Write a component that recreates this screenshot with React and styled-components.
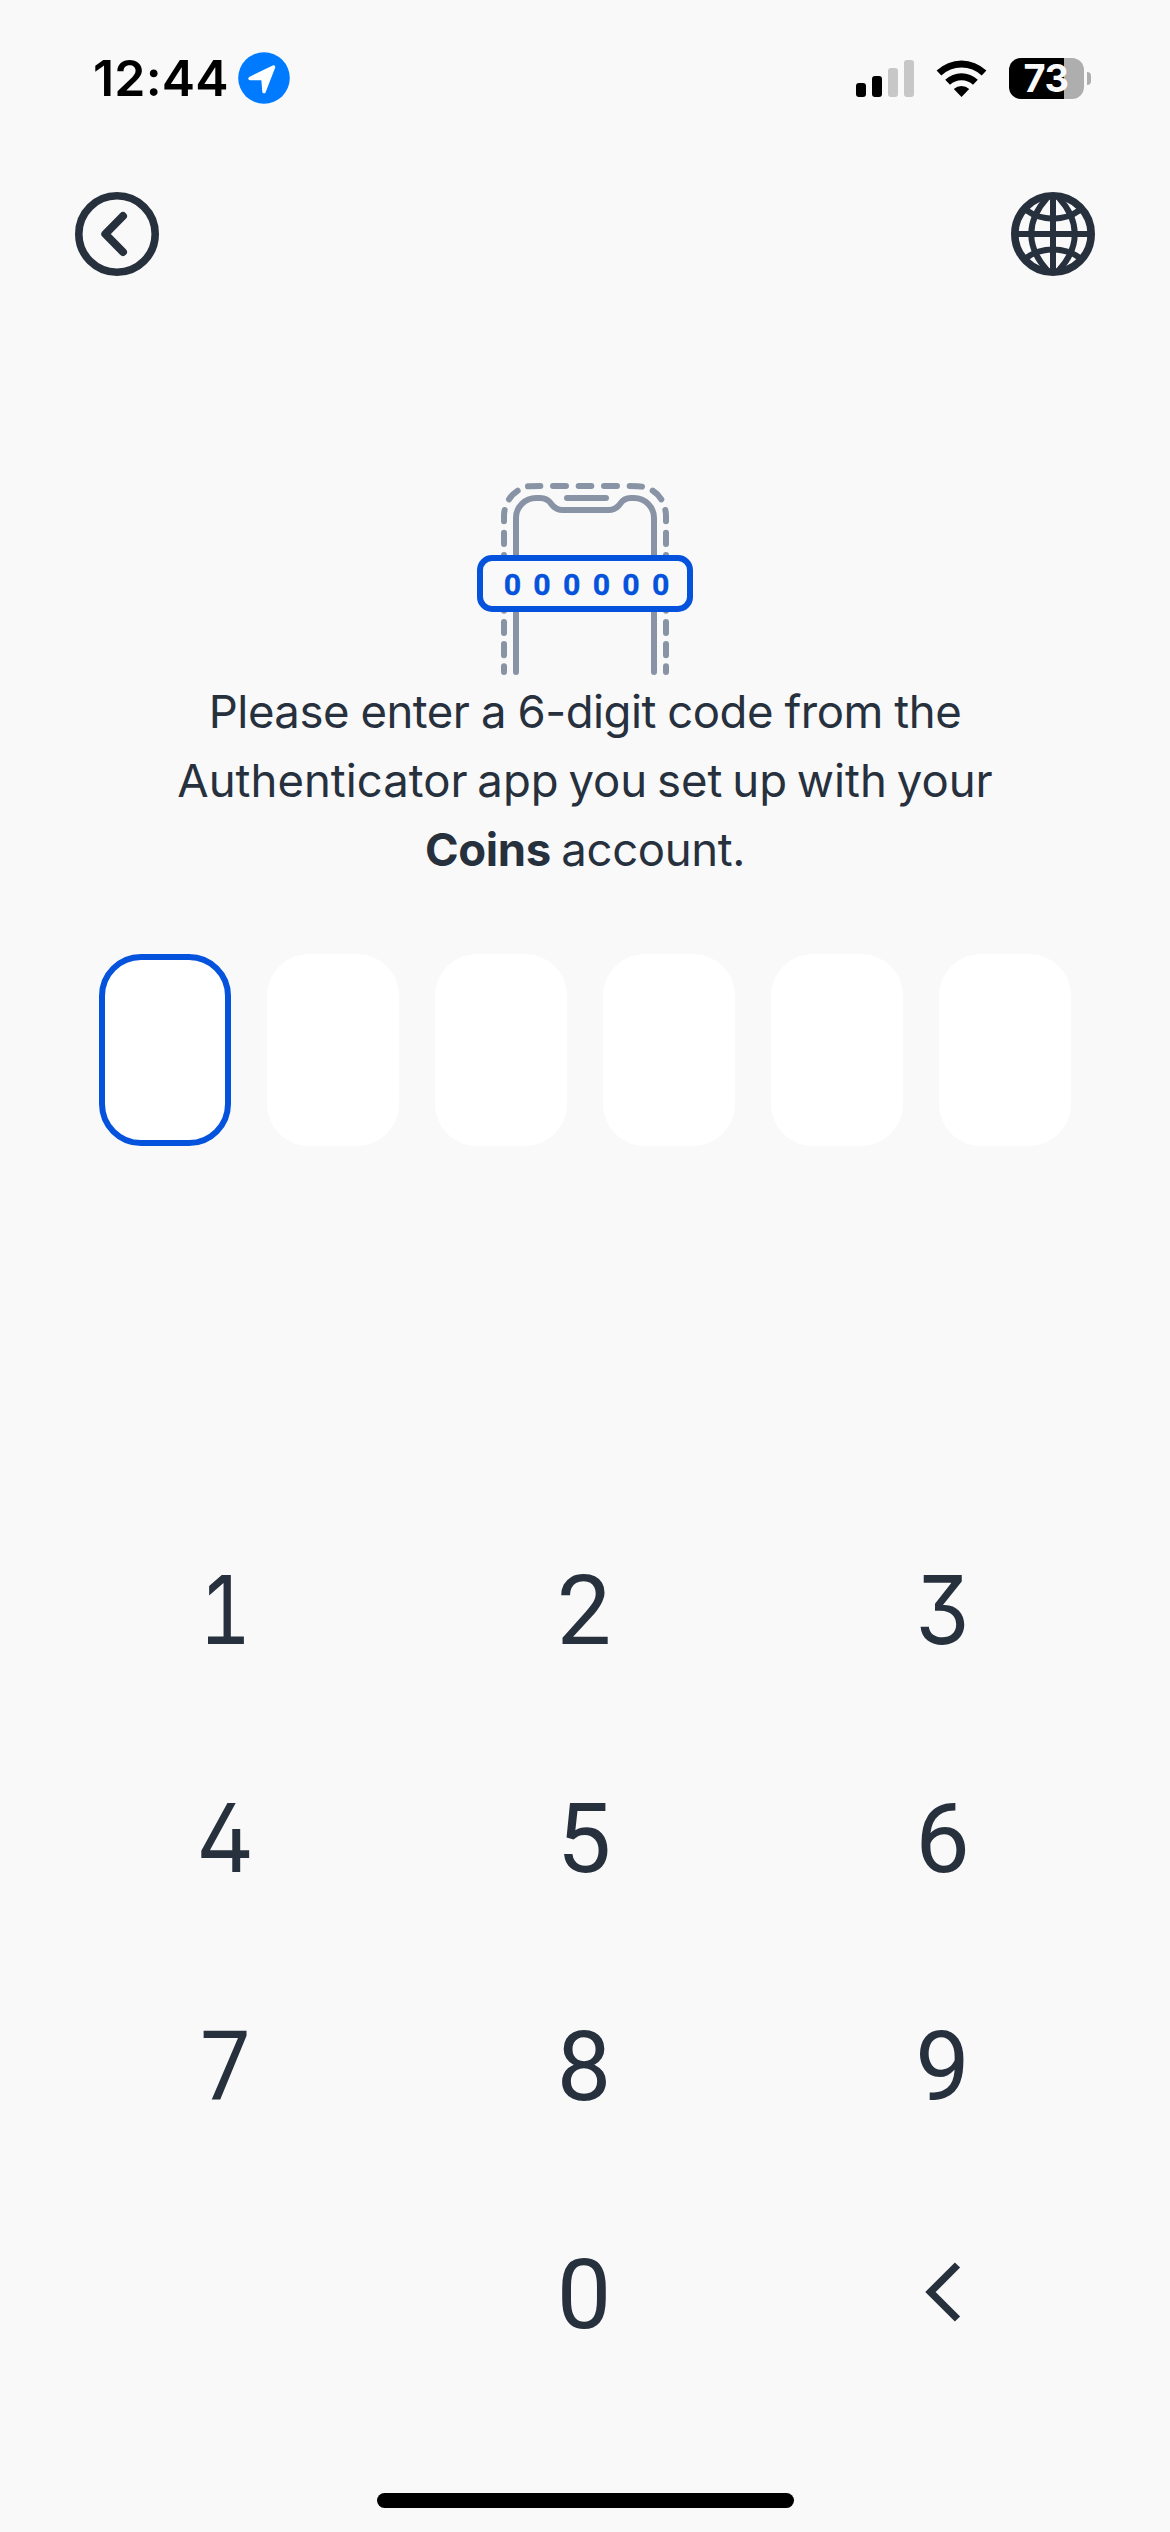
import React from 'react'
import styled, { createGlobalStyle } from 'styled-components'

const GlobalStyle = createGlobalStyle`
    * {
        box-sizing: border-box;
    }

    body {
        margin: 0;
        background: #f9f9f9;
        font-family: Inter, 'Liberation Sans', sans-serif;
        color: #27313e;
    }

    svg {
        display: block;
        flex-shrink: 0;
    }
`

const Screen = styled.div`
    display: flex;
    flex-direction: column;
    width: 1170px;
    height: 2532px;
    overflow: hidden;
    background: #f9f9f9;
`

const StatusBar = styled.div`
    display: flex;
    align-items: center;
    justify-content: space-between;
    height: 156px;
    padding: 0 79px 0 93px;
`

const StatusGroup = styled.div`
    display: flex;
    align-items: center;
`

const Time = styled.span`
    width: 145px;
    font-size: 50px;
    font-weight: 600;
    line-height: 60px;
    letter-spacing: 0.2px;
    color: #000;
    white-space: nowrap;
`

const Signal = styled.div`
    display: flex;
    align-items: flex-end;
    gap: 6px;
    height: 37px;
    margin-right: 22px;
`

const SignalBar = styled.div`
    width: 10px;
    height: ${props => props.$height}px;
    border-radius: 3px;
    background: ${props => (props.$on ? '#000' : '#c7c7c7')};
`

const Battery = styled.div`
    display: flex;
    align-items: center;
    gap: 3px;
    margin-left: 22px;
`

const BatteryBody = styled.div`
    display: flex;
    align-items: center;
    justify-content: center;
    width: 75px;
    height: 41px;
    padding-right: 1px;
    border-radius: 12px;
    background: linear-gradient(to right, #000 55px, #aeaeae 55px);
    color: #f9f9f9;
    font-size: 38px;
    font-weight: 700;
    letter-spacing: -0.5px;
`

const BatteryCap = styled.div`
    width: 4px;
    height: 13px;
    border-radius: 0 4px 4px 0;
    background: #aeaeae;
`

const Header = styled.div`
    display: flex;
    justify-content: space-between;
    height: 304px;
    padding: 36px 75px 0;
`

const IconButton = styled.button`
    width: 84px;
    height: 84px;
    padding: 0;
    border: none;
    background: none;
    color: inherit;
`

const Content = styled.div`
    display: flex;
    flex-direction: column;
    align-items: center;
    height: 1038px;
`

const Message = styled.p`
    margin: -13px 0 0;
    font-size: 45.5px;
    line-height: 69px;
    text-align: center;
`

const Line = styled.span`
    display: block;
    white-space: nowrap;
    letter-spacing: ${props => props.$tracking}px;
    word-spacing: ${props => props.$gap}px;
`

const Brand = styled.strong`
    font-weight: 700;
`

const CodeRow = styled.div`
    display: flex;
    gap: 36px;
    margin-top: 70px;
`

const CodeBox = styled.div`
    width: 132px;
    height: 192px;
    border: 6px solid ${props => (props.$active ? '#0552dc' : '#fff')};
    border-radius: 42px;
    background: #fff;
`

const Keypad = styled.div`
    display: grid;
    grid-template-columns: repeat(3, 358.5px);
    grid-auto-rows: 228px;
    justify-content: center;
    height: 995px;
    padding-right: 2px;
`

const Key = styled.button`
    display: flex;
    align-items: center;
    justify-content: center;
    padding: 0 0 ${props => props.$lift}px;
    border: none;
    background: none;
    color: inherit;
    font-family: ${props => props.$font}, sans-serif;
    font-size: ${props => (props.$font === 'Roboto' ? 97 : 95)}px;
    font-feature-settings: ${props => props.$features || 'normal'};
    transform: scaleX(${props => props.$stretch || 1});
`

const HomeBar = styled.div`
    align-self: center;
    width: 417px;
    height: 15px;
    border-radius: 8px;
    background: #000;
`

const bars = [
    { height: 14, on: true },
    { height: 21, on: true },
    { height: 29, on: false },
    { height: 37, on: false },
]

const keys = [
    { label: '1', font: 'Inter', lift: 5, features: "'tnum'", stretch: 0.84 },
    { label: '2', font: 'Roboto', lift: 3 },
    { label: '3', font: 'Inter', lift: 5, features: "'cv09'", stretch: 0.92 },
    { label: '4', font: 'Inter', lift: 5, features: "'tnum', 'cv02'", stretch: 0.95 },
    { label: '5', font: 'Roboto', lift: 3 },
    { label: '6', font: 'Roboto', lift: 3 },
    { label: '7', font: 'Roboto', lift: 3, stretch: 0.92 },
    { label: '8', font: 'Roboto', lift: 3 },
    { label: '9', font: 'Roboto', lift: 3 },
    { label: '' },
    { label: '0', font: 'Roboto', lift: 3 },
    { label: 'delete', font: 'Inter', lift: 8 },
]

function LocationIcon() {
    return (
        <svg width="52" height="52" viewBox="0 0 52 52">
            <circle cx="26" cy="26" r="25.8" fill="#007aff" />
            <path
                d="M12 26.5L35.5 15L26 39.5L25 26.5Z"
                fill="#fff"
                stroke="#fff"
                strokeWidth="3.5"
                strokeLinejoin="round"
            />
        </svg>
    )
}

function WifiIcon() {
    return (
        <svg width="51" height="37" viewBox="0 0 51 37">
            <path d="M0.6 10.6a36 36 0 0 1 49.8 0l-4.7 4.9a29.2 29.2 0 0 0-40.4 0z" />
            <path d="M9.2 19.8a23.6 23.6 0 0 1 32.6 0l-4.8 4.9a16.8 16.8 0 0 0-23 0z" />
            <path d="M17.8 28.9a11.4 11.4 0 0 1 15.4 0L25.5 37z" />
        </svg>
    )
}

function BackIcon() {
    return (
        <svg width="84" height="84" viewBox="0 0 84 84" fill="none" stroke="currentColor">
            <circle cx="42" cy="42" r="38.2" strokeWidth="7.6" />
            <path d="M48 24L30.3 42L48 60" strokeWidth="8" strokeLinecap="round" strokeLinejoin="round" />
        </svg>
    )
}

function GlobeIcon() {
    return (
        <svg width="84" height="84" viewBox="0 0 84 84" fill="none" stroke="currentColor" strokeWidth="6">
            <circle cx="42" cy="42" r="38.2" strokeWidth="7.6" />
            <path d="M42 4V80M4 42H80" />
            <path d="M36 6C15 29 15 55 36 78M48 6C69 29 69 55 48 78" />
            <path d="M15 18C31 29.5 53 29.5 69 18M15 66C31 54.5 53 54.5 69 66" />
        </svg>
    )
}

function CodeIllustration() {
    return (
        <svg width="250" height="230" viewBox="0 0 750 690" fill="none" strokeWidth="18" strokeLinecap="round">
            <g stroke="#8894a5">
                <path d="M168 636V174a60 60 0 0 1 60-60h12c14 0 26 6 34 18c10 14 20 18 34 18h138c14 0 24-4 34-18c8-12 20-18 32-18h10a60 60 0 0 1 60 60V636" />
                <path d="M321 114H438" />
                <path d="M204 79Q214 78 241 78M279 78H318M356 78H394M432 78H471M509 78Q536 78 546 80" />
                <path d="M147 118Q156 103 173 92M578 92Q594 102 604 118" />
                <path d="M132 184V166Q132 158 134 150M618 184V166Q618 158 616 150" />
                <path d="M132 218V252M132 285V300M132 452V451M132 486V519M132 552V586M132 619V636" />
                <path d="M618 218V252M618 285V300M618 452V451M618 486V519M618 552V586M618 619V636" />
            </g>
            <rect x="60" y="294" width="630" height="153" rx="36" fill="#f9f9f9" stroke="#0552dc" />
            <g
                fill="#0552dc"
                stroke="#0552dc"
                strokeWidth="1"
                fontFamily="Roboto, sans-serif"
                fontSize="91"
                fontWeight="700"
                textAnchor="middle"
            >
                {[157, 246, 335, 424, 513, 602].map(x => (
                    <text key={x} x={x} y="404">0</text>
                ))}
            </g>
        </svg>
    )
}

function DeleteIcon() {
    return (
        <svg width="36" height="60" viewBox="0 0 36 60" fill="none" stroke="currentColor" strokeWidth="7.4">
            <path d="M32.5 3L5.5 30L32.5 57" />
        </svg>
    )
}

export default function App() {
    return (
        <Screen>
            <GlobalStyle />
            <StatusBar>
                <StatusGroup>
                    <Time>12:44</Time>
                    <LocationIcon />
                </StatusGroup>
                <StatusGroup>
                    <Signal>
                        {bars.map(bar => (
                            <SignalBar key={bar.height} $height={bar.height} $on={bar.on} />
                        ))}
                    </Signal>
                    <WifiIcon />
                    <Battery>
                        <BatteryBody>73</BatteryBody>
                        <BatteryCap />
                    </Battery>
                </StatusGroup>
            </StatusBar>

            <Header>
                <IconButton aria-label="Back">
                    <BackIcon />
                </IconButton>
                <IconButton aria-label="Language">
                    <GlobeIcon />
                </IconButton>
            </Header>

            <Content>
                <CodeIllustration />
                <Message>
                    <Line $tracking={-0.5} $gap={-0.8}>Please enter a 6-digit code from the</Line>
                    <Line $tracking={0} $gap={-3}>Authenticator app you set up with your</Line>
                    <Line $tracking={-0.35} $gap={-2}>
                        <Brand>Coins</Brand> account.
                    </Line>
                </Message>
                <CodeRow>
                    {[0, 1, 2, 3, 4, 5].map(index => (
                        <CodeBox key={index} $active={index === 0} />
                    ))}
                </CodeRow>
            </Content>

            <Keypad>
                {keys.map(key => {
                    if (key.label === '') return <span key="empty" />
                    return (
                        <Key
                            key={key.label}
                            aria-label={key.label}
                            $font={key.font}
                            $lift={key.lift}
                            $features={key.features}
                            $stretch={key.stretch}
                        >
                            {key.label === 'delete' ? <DeleteIcon /> : key.label}
                        </Key>
                    )
                })}
            </Keypad>

            <HomeBar />
        </Screen>
    )
}
